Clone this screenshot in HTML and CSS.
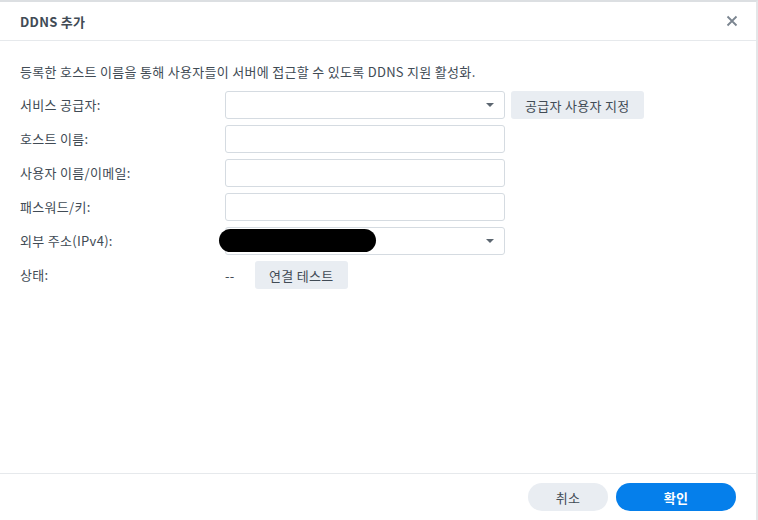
FILE: index.html
```html
<!doctype html>
<html>
<head>
  <title>DDNS 추가</title>
  <link rel="stylesheet" href="styles.css">
</head>
<body>
  <div class="dialog">
    <header class="head">
      <h1>DDNS 추가</h1>
      <button class="close" aria-label="닫기">
        <svg width="12" height="12" viewBox="0 0 12 12">
          <path d="M1.5 1.5l9 9M10.5 1.5l-9 9" stroke="#7b8590" stroke-width="1.8" fill="none"/>
        </svg>
      </button>
    </header>
    <main class="body">
      <p class="desc">등록한 호스트 이름을 통해 사용자들이 서버에 접근할 수 있도록 DDNS 지원 활성화.</p>
      <div class="form">
        <label>서비스 공급자:</label>
        <div class="field">
          <div class="select"><span class="caret"></span></div>
          <button class="btn">공급자 사용자 지정</button>
        </div>

        <label>호스트 이름:</label>
        <div class="field"><input type="text"></div>

        <label>사용자 이름/이메일:</label>
        <div class="field"><input type="text"></div>

        <label>패스워드/키:</label>
        <div class="field"><input type="password"></div>

        <label>외부 주소(IPv4):</label>
        <div class="field">
          <div class="select"><span class="redact"></span><span class="caret"></span></div>
        </div>

        <label>상태:</label>
        <div class="field">
          <span class="status">--</span>
          <button class="btn">연결 테스트</button>
        </div>
      </div>
    </main>
    <footer class="foot">
      <button class="pill">취소</button>
      <button class="pill primary">확인</button>
    </footer>
  </div>
</body>
</html>
```

FILE: styles.css
```css
html, body {
  margin: 0;
  height: 100%;
}
body {
  font-family: "Noto Sans CJK KR", "Noto Sans", sans-serif;
  font-size: 13px;
  letter-spacing: .3px;
  color: #414b55;
  background: #fff;
}
button, input {
  font: inherit;
  letter-spacing: inherit;
}
.dialog {
  box-sizing: border-box;
  height: 520px;
  display: flex;
  flex-direction: column;
  border-top: 2px solid #dcdfe2;
  border-right: 2px solid #e4e6e8;
}
.head {
  display: flex;
  align-items: center;
  justify-content: space-between;
  height: 38px;
  padding: 0 20px;
  border-bottom: 1px solid #e6e9ec;
}
.head h1 {
  margin: 0;
  font-size: 13px;
  font-weight: bold;
  color: #414b55;
}
.close {
  border: 0;
  background: none;
  padding: 0;
  margin-right: -2px;
  display: flex;
}
.body {
  flex: 1;
  padding: 20px 20px 0;
}
.desc {
  margin: 0 0 8px;
  line-height: 22px;
}
.form {
  display: grid;
  grid-template-columns: 205px 1fr;
  row-gap: 6px;
  align-items: center;
}
.form label {
  line-height: 28px;
}
.field {
  display: flex;
  align-items: center;
  gap: 6px;
}
input, .select {
  box-sizing: border-box;
  width: 280px;
  height: 28px;
  border: 1px solid #d5dbe1;
  border-radius: 3px;
  background: #fff;
  padding: 0 8px;
  outline: none;
}
.select {
  position: relative;
}
.caret {
  position: absolute;
  right: 10px;
  top: 11px;
  border-left: 4px solid transparent;
  border-right: 4px solid transparent;
  border-top: 4px solid #5c6670;
}
.redact {
  position: absolute;
  left: -7px;
  top: 1px;
  width: 157px;
  height: 23px;
  border-radius: 12px;
  background: #000;
}
.btn {
  height: 28px;
  border: 0;
  border-radius: 3px;
  background: #e9edf2;
  color: #414b55;
  padding: 0 14px;
}
.status {
  width: 24px;
}
.foot {
  display: flex;
  justify-content: flex-end;
  gap: 8px;
  height: 47px;
  padding: 9px 20px 0 0;
  border-top: 1px solid #e6e9ec;
  box-sizing: border-box;
}
.pill {
  height: 28px;
  width: 80px;
  border: 0;
  border-radius: 14px;
  background: #e9edf2;
  color: #414b55;
}
.pill.primary {
  width: 120px;
  background: #057feb;
  color: #fff;
  font-weight: bold;
}
```
